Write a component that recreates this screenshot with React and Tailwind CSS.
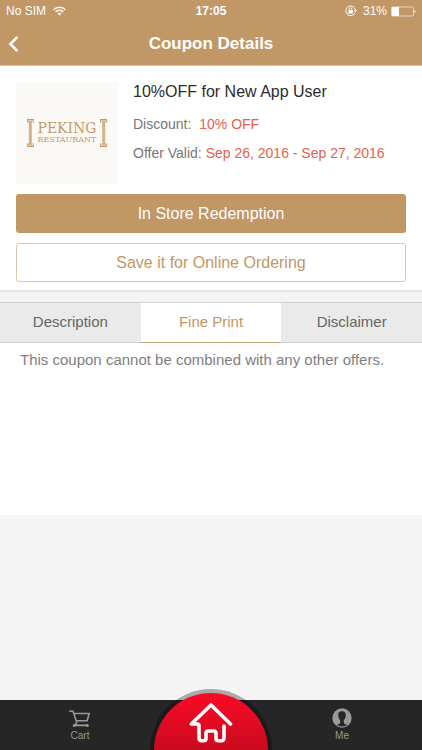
import React, { useState } from 'react'

const TABS = [
  { id: 'description', label: 'Description', text: '' },
  { id: 'fine', label: 'Fine Print', text: 'This coupon cannot be combined with any other offers.' },
  { id: 'disclaimer', label: 'Disclaimer', text: '' },
]

function StatusBar() {
  return (
    <div className="grid grid-cols-3 items-center h-[22px] px-[6px] text-xs">
      <div className="flex items-center gap-[7px]">
        <span>No SIM</span>
        <svg className="w-[13px] h-[10px]" viewBox="0 0 13 10" fill="none" stroke="currentColor" strokeWidth="1.5" aria-hidden="true">
          <path d="M.6 3.7a8.3 8.3 0 0 1 11.8 0M2.7 5.9a5.4 5.4 0 0 1 7.6 0" />
          <path d="M6.5 9.6 4.5 7.5a2.9 2.9 0 0 1 4 0z" fill="currentColor" stroke="none" />
        </svg>
      </div>
      <div className="text-center font-bold">17:05</div>
      <div className="flex items-center justify-end">
        <svg className="w-3 h-3 mr-[6px]" viewBox="0 0 12 12" fill="none" stroke="currentColor" aria-hidden="true">
          <path d="M9.8 8.2A4.8 4.8 0 1 1 10.4 5.2" />
          <path d="M8.8 5.2h3.1l-1.5 2.2z" fill="currentColor" stroke="none" />
          <rect x="3.3" y="5.2" width="4.6" height="3.3" rx=".3" fill="currentColor" stroke="none" />
          <path d="M4.3 5.3V4.2a1.3 1.3 0 0 1 2.6 0v1.1" strokeWidth=".9" />
        </svg>
        <span className="mr-1">31%</span>
        <svg className="w-[25px] h-[11px]" viewBox="0 0 25 11" aria-hidden="true">
          <rect x=".5" y="1" width="22" height="9" rx="1" fill="none" stroke="currentColor" strokeOpacity=".6" />
          <rect x="1" y="1" width="7" height="9" fill="currentColor" />
          <path d="M23.5 4c1.3.4 1.3 2.6 0 3z" fill="currentColor" />
        </svg>
      </div>
    </div>
  )
}

function Header() {
  return (
    <header className="bg-[#c29766] text-white border-b border-[#d9c2a8]">
      <StatusBar />
      <div className="grid grid-cols-[40px_1fr_40px] items-center h-[43px]">
        <button type="button" aria-label="Back" className="pl-2 h-full">
          <svg className="w-3 h-4" viewBox="0 0 12 16" fill="none" stroke="currentColor" strokeWidth="2.6" aria-hidden="true">
            <path d="M9.400.9 2.400 8l7 7.100" />
          </svg>
        </button>
        <h1 className="text-center text-[17px] font-bold">Coupon Details</h1>
      </div>
    </header>
  )
}

function Bracket({ className }) {
  return (
    <svg className={className} viewBox="0 0 7 28" fill="none" stroke="currentColor" aria-hidden="true">
      <path d="M0 .8h7M0 27.200h7" strokeWidth="1.400" />
      <path d="M1 2.800h4M1 25.200h4" />
      <path d="M3.300 3v22" strokeWidth="3" strokeOpacity=".75" />
      <path d="M6.300 1v3M6.300 24v3M.5 1v2.500M.5 24.500v2.500" strokeWidth=".9" />
    </svg>
  )
}

function RestaurantLogo() {
  return (
    <div className="flex shrink-0 items-center justify-center gap-[3px] w-[102px] h-[102px] bg-[#fbf9f6] text-[#c79a67]">
      <Bracket className="w-[7px] h-7" />
      <div className="flex flex-col items-center font-['DejaVu_Serif',serif]">
        <span className="text-[14px] leading-[14px]">PEKING</span>
        <span className="text-[8px] leading-[10px]">RESTAURANT</span>
      </div>
      <Bracket className="w-[7px] h-7 -scale-x-100" />
    </div>
  )
}

function CouponCard() {
  return (
    <section className="bg-white px-4 pt-4 pb-2 border-b-2 border-[#e6e6e6]">
      <div className="flex gap-[15px]">
        <RestaurantLogo />
        <div className="text-[14px] leading-[29px] text-[#777]">
          <h2 className="text-[16px] leading-5 mb-2 text-[#2b2b2b]">10%OFF for New App User</h2>
          <p>Discount: <span className="ml-1 text-[#e8604a]">10% OFF</span></p>
          <p>Offer Valid: <span className="text-[#e8604a]">Sep 26, 2016 - Sep 27, 2016</span></p>
        </div>
      </div>
      <div className="flex flex-col gap-[10px] mt-[10px] text-[16px]">
        <button type="button" className="h-[39px] rounded-[3px] bg-[#c29766] text-white">In Store Redemption</button>
        <button type="button" className="h-[39px] rounded-[3px] border border-[#dcc5aa] text-[#c29766]">Save it for Online Ordering</button>
      </div>
    </section>
  )
}

function DetailTabs() {
  const [active, setActive] = useState('fine')
  const current = TABS.find((t) => t.id === active)
  return (
    <section className="mt-[10px]">
      <div role="tablist" className="grid grid-cols-3 h-[41px] text-[15px]">
        {TABS.map((t) => (
          <button key={t.id} id={`tab-${t.id}`} type="button" role="tab"
            aria-selected={t.id === active} aria-controls="tab-panel"
            onClick={() => setActive(t.id)}
            className={t.id === active
              ? 'border-y border-t-[#d4d4d4] border-b-[#c9a377] bg-white text-[#c29766]'
              : 'border-y border-[#cfcfcf] bg-[#eaeaea] text-[#666]'}>
            {t.label}
          </button>
        ))}
      </div>
      <div id="tab-panel" role="tabpanel" aria-labelledby={`tab-${active}`}
        className="min-h-[172px] bg-white px-5 pt-[6px] text-[15px] leading-[22px] text-[#808080]">
        {current.text}
      </div>
    </section>
  )
}

function BottomNav() {
  return (
    <nav className="relative grid grid-cols-[160px_1fr_160px] h-[50px] bg-[#262626] text-[#999] text-[10px] leading-3">
      <a href="#cart" className="flex flex-col items-center gap-[2px] pt-[10px]">
        <svg className="w-[22px] h-[18px]" viewBox="0 0 22 18" fill="none" stroke="currentColor" strokeWidth="1.6" aria-hidden="true">
          <path d="M.3 1.300h3.700l3.900 11.500M5 3.500h15.200l-2.100 7.200H7.200" />
          <path d="M7.900 12.800 5.300 15.400h13" />
          <circle cx="5.300" cy="15.600" r="1.500" fill="currentColor" stroke="none" />
          <circle cx="18.300" cy="15.600" r="1.500" fill="currentColor" stroke="none" />
        </svg>
        <span>Cart</span>
      </a>
      <a href="#home" aria-label="Home"
        className="absolute bottom-0 left-1/2 -translate-x-1/2 w-[122px] h-[61px] rounded-t-full bg-black/30 px-1 pt-1">
        <span className="flex justify-center pt-[10px] h-full rounded-t-full bg-linear-to-b from-[#fa0a26] to-[#cb0a1e] text-white">
          <svg className="w-11 h-10" viewBox="0 0 44 40" fill="none" stroke="currentColor" strokeWidth="3.600" strokeLinecap="round" strokeLinejoin="round" aria-hidden="true">
            <path d="M41.500 21 22 2 2.300 21h6q1.700 0 1.700 1.700v12q0 3 3 3h1.500q2.500 0 2.500-2.500v-4.700q0-2.500 2.500-2.500h5q2.500 0 2.500 2.500v4.700q0 2.500 2.500 2.500h2.500q3 0 3-3V23" />
          </svg>
        </span>
      </a>
      <a href="#me" className="col-start-3 flex flex-col items-center gap-[2px] pt-[8px]">
        <svg className="w-5 h-5" viewBox="0 0 20 20" aria-hidden="true">
          <circle cx="10" cy="10" r="9.700" fill="currentColor" />
          <path d="M10 3.200c-2.600 0-3.900 1.500-3.800 3.900.1 2.400.9 4 2 5.100v2.600c-.2 1.200-1.800 1.700-3.300 2.200 3.100 1.900 7.100 1.900 10.200 0-1.500-.5-3.100-1-3.300-2.200v-2.600c1.100-1.100 1.900-2.700 2-5.100.1-2.400-1.200-3.900-3.800-3.900z" fill="#262626" />
        </svg>
        <span>Me</span>
      </a>
    </nav>
  )
}

export default function App() {
  return (
    <div className="flex flex-col min-h-screen bg-[#f4f4f4] font-['Liberation_Sans',Arial,sans-serif]">
      <Header />
      <main className="flex-1">
        <CouponCard />
        <DetailTabs />
      </main>
      <BottomNav />
    </div>
  )
}
